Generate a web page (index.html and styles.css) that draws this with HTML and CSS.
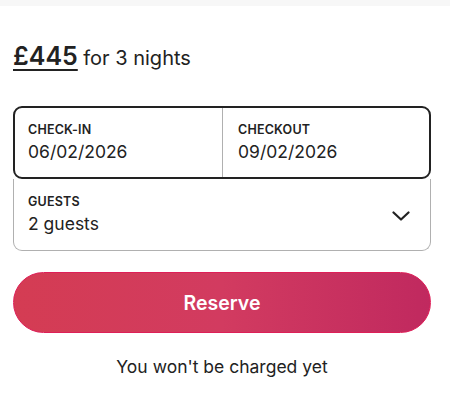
FILE: index.html
```html
<!DOCTYPE html>
<html lang="en">
<head>
<meta charset="utf-8">
<title>Reserve</title>
<link rel="stylesheet" href="styles.css">
</head>
<body>
<div class="topbar"></div>
<main class="booking">
  <div class="price"><span class="amount">£445</span> <span class="period">for 3 nights</span></div>
  <div class="picker">
    <div class="dates">
      <div class="cell">
        <div class="label">CHECK-IN</div>
        <div class="value">06/02/2026</div>
      </div>
      <div class="cell cell-right">
        <div class="label">CHECKOUT</div>
        <div class="value">09/02/2026</div>
      </div>
    </div>
    <div class="guests">
      <div class="guests-text">
        <div class="label">GUESTS</div>
        <div class="value">2 guests</div>
      </div>
      <svg class="chevron" width="18" height="10" viewBox="0 0 18 10" aria-hidden="true">
        <path d="M1.5 1.5 L9 8.5 L16.5 1.5" fill="none" stroke="#222" stroke-width="2.2" stroke-linecap="round" stroke-linejoin="round"/>
      </svg>
    </div>
  </div>
  <button class="reserve" type="button">Reserve</button>
  <p class="note">You won't be charged yet</p>
</main>
</body>
</html>
```
FILE: styles.css
```css
* { box-sizing: border-box; }
html, body { margin: 0; padding: 0; background: #fff; }
body {
  font-family: Inter, "Noto Sans", "Liberation Sans", sans-serif;
  color: #222;
  width: 450px;
}
.topbar { height: 6px; background: #f7f7f7; }
.booking { padding: 0 19px 0 13px; }
.price {
  margin-top: 34px;
  margin-bottom: 34px;
  line-height: 32px;
  height: 32px;
  white-space: nowrap;
}
.amount {
  font-size: 25px;
  font-weight: 600;
  text-decoration: underline;
  text-decoration-thickness: 2px;
  text-underline-offset: 4px;
}
.period { font-size: 20px; font-weight: 400; margin-left: 1px; }
.picker { display: flex; flex-direction: column; }
.dates {
  display: grid;
  grid-template-columns: 1fr 1fr;
  border: 2px solid #222;
  border-radius: 9px;
}
.cell { padding: 14px 13px 13px; }
.cell-right { border-left: 1px solid #b0b0b0; padding-left: 15px; }
.label {
  font-size: 12.5px;
  font-weight: 600;
  line-height: 16px;
  height: 16px;
  letter-spacing: 0.2px;
}
.value {
  font-size: 17.5px;
  line-height: 24px;
  height: 24px;
  margin-top: 2px;
}
.guests {
  display: flex;
  align-items: center;
  justify-content: space-between;
  border: 1px solid #b0b0b0;
  border-top: none;
  border-radius: 0 0 9px 9px;
  padding: 15px 20px 14px 14px;
}
.chevron { display: block; margin-top: 2px; }
.reserve {
  display: block;
  width: 100%;
  height: 61px;
  margin-top: 21px;
  border: 1px solid #de1f58;
  border-radius: 31px;
  background: linear-gradient(90deg, #d43c53 0%, #d23b60 50%, #c0295f 100%);
  color: #fff;
  font-family: inherit;
  font-size: 19.5px;
  font-weight: 600;
  padding: 0;
}
.note {
  margin: 22px 0 0;
  text-align: center;
  font-size: 17.5px;
  line-height: 24px;
}
```
